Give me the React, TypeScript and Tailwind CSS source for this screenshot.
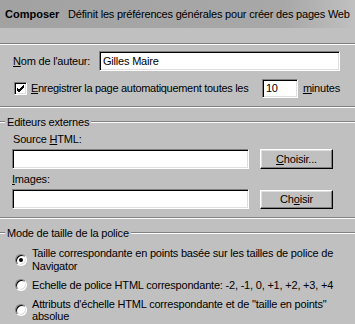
import * as React from "react"

const sunken = "bg-white border border-t-[#808080] border-l-[#808080] border-b-white border-r-white shadow-[inset_1px_1px_0_#000,inset_-1px_-1px_0_#dfdfdf]"
const raised = "bg-[#c0c0c0] border border-t-white border-l-white border-b-black border-r-black shadow-[inset_-1px_-1px_0_#808080,inset_1px_1px_0_#dfdfdf]"

function Etched() {
    return <div className="h-[2px] border-t border-t-[#808080] border-b border-b-white" />
}

function GroupTitle({ children }: { children: React.ReactNode }) {
    return (
        <div className="flex items-center h-[14px]">
            <div className="w-[5px]"><Etched /></div>
            <span className="px-[2px] leading-[14px] whitespace-nowrap">{children}</span>
            <div className="flex-1"><Etched /></div>
        </div>
    )
}

function Radio({ checked }: { checked?: boolean }) {
    return (
        <div className="relative w-[12px] h-[12px] shrink-0 rounded-full bg-white border border-t-[#808080] border-l-[#808080] border-b-white border-r-white shadow-[inset_1px_1px_0_#000,inset_-1px_-1px_0_#dfdfdf]">
            {checked && <div className="absolute left-[3px] top-[3px] w-[4px] h-[4px] rounded-full bg-black" />}
        </div>
    )
}

export default function App() {
    return (
        <div className="w-[355px] h-[324px] overflow-hidden bg-[#c0c0c0] text-black text-[11px] tracking-[-0.2px] font-['Liberation_Sans',Arial,sans-serif]">
            {/* header band */}
            <div className="h-[28px] flex items-center pl-[5px] whitespace-nowrap bg-linear-to-r from-[#a2a2a2] via-[#a8a8a8] via-80% to-[#c0c0c0]">
                <span className="font-bold w-[63px] tracking-normal">Composer</span>
                <span>Définit les préférences générales pour créer des pages Web</span>
            </div>
            <div className="h-[15px]" />
            <Etched />

            {/* author */}
            <div className="pl-[13px] pr-[15px] pt-[6px] pb-[8px]">
                <div className="flex items-center h-[20px]">
                    <span className="w-[86px] whitespace-nowrap"><u>N</u>om de l'auteur:</span>
                    <div className={`flex-1 h-[20px] pl-[3px] flex items-center ${sunken}`}>Gilles Maire</div>
                </div>
                <div className="flex items-center h-[20px] mt-[7px]">
                    <div className={`w-[13px] h-[13px] ml-[1px] shrink-0 flex items-center justify-center ${sunken}`}>
                        <svg width="9" height="9" viewBox="0 0 9 9">
                            <path d="M1 4 L3 6 L8 1 M1 5 L3 7 L8 2 M1 6 L3 8 L8 3" stroke="#000" strokeWidth="1" fill="none" />
                        </svg>
                    </div>
                    <span className="ml-[4px] w-[235px] whitespace-nowrap tracking-[-0.3px]"><u>E</u>nregistrer la page automatiquement toutes les</span>
                    <div className={`w-[36px] h-[19px] pl-[3px] shrink-0 flex items-center ${sunken}`}>10</div>
                    <span className="ml-[5px] whitespace-nowrap"><u>m</u>inutes</span>
                </div>
            </div>
            <Etched />

            {/* external editors */}
            <div className="mt-[7px]">
                <GroupTitle>Editeurs externes</GroupTitle>
            </div>
            <div className="pl-[12px] pr-[22px]">
                <div className="mt-[4px] h-[12px] leading-[12px] pl-[1px]">Source <u>H</u>TML:</div>
                <div className="mt-[4px] flex items-center gap-[11px]">
                    <div className={`w-[237px] h-[20px] ${sunken}`} />
                    <button className={`w-[73px] h-[20px] ${raised}`}><u>C</u>hoisir...</button>
                </div>
                <div className="mt-[4px] h-[12px] leading-[12px]"><u>I</u>mages:</div>
                <div className="mt-[4px] flex items-center gap-[11px]">
                    <div className={`w-[237px] h-[20px] ${sunken}`} />
                    <button className={`w-[73px] h-[19px] ${raised}`}>Ch<u>o</u>isir</button>
                </div>
            </div>
            <div className="mt-[8px]"><Etched /></div>

            {/* font size mode */}
            <div className="mt-[7px]">
                <GroupTitle>Mode de taille de la police</GroupTitle>
            </div>
            <div className="pl-[15px] pr-[12px] leading-[12.5px]">
                <div className="mt-[7px] flex items-center gap-[5px]">
                    <Radio checked />
                    <span>Taille correspondante en points basée sur les tailles de police de Navigator</span>
                </div>
                <div className="mt-[7px] flex items-center gap-[5px]">
                    <Radio />
                    <span className="whitespace-nowrap">Echelle de police HTML correspondante: -2, -1, 0, +1, +2, +3, +4</span>
                </div>
                <div className="mt-[6px] flex items-center gap-[5px]">
                    <Radio />
                    <span>Attributs d'échelle HTML correspondante et de "taille en points" absolue</span>
                </div>
            </div>
        </div>
    )
}
